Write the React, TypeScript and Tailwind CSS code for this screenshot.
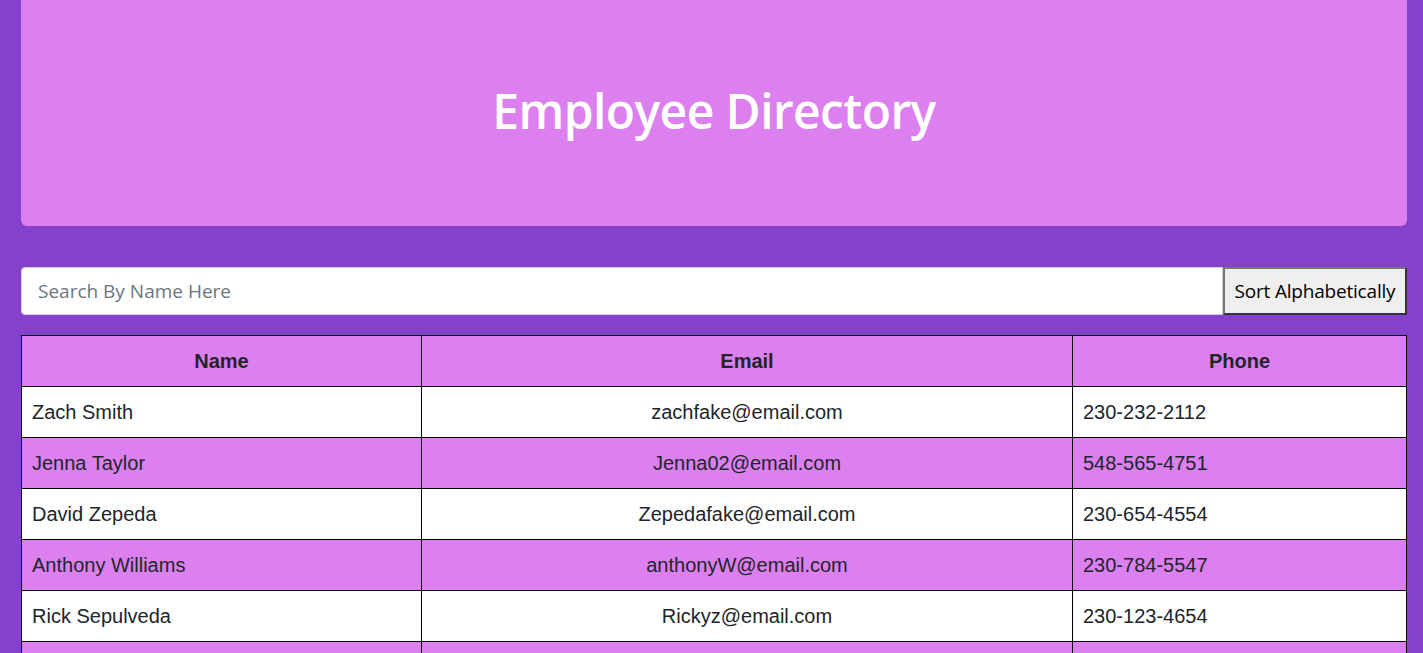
import React from "react";

const employees = [
  { name: "Zach Smith", email: "zachfake@email.com", phone: "230-232-2112" },
  { name: "Jenna Taylor", email: "Jenna02@email.com", phone: "548-565-4751" },
  { name: "David Zepeda", email: "Zepedafake@email.com", phone: "230-654-4554" },
  { name: "Anthony Williams", email: "anthonyW@email.com", phone: "230-784-5547" },
  { name: "Rick Sepulveda", email: "Rickyz@email.com", phone: "230-123-4654" },
  { name: "Maria Lopez", email: "marialopez@email.com", phone: "230-555-1234" },
];

export default function App() {
  return (
    <main className="min-h-screen bg-[#8540cc] pl-[21px] pr-[16px] pb-8">
      <div className="mb-[41px] flex h-[226px] items-center justify-center rounded-b-md bg-[#dc80f0]">
        <h1 className="mb-[4px] font-['Open_Sans',sans-serif] text-[48px] font-semibold tracking-[-0.6px] text-white">
          Employee Directory
        </h1>
      </div>

      <div className="mb-5 flex h-12">
        <input
          type="text"
          placeholder="Search By Name Here"
          className="h-12 flex-1 rounded-l-[4px] border border-[#ced4da] bg-white px-4 font-['Open_Sans',sans-serif] text-[19px] text-[#495057] placeholder:text-[#6c757d] focus:outline-none"
        />
        <button className="h-12 w-[184px] border-2 border-[#333] border-t-[#767676] border-l-[#767676] bg-[#efefef] font-['Open_Sans',sans-serif] text-[19px] tracking-[-0.2px] text-black">
          Sort Alphabetically
        </button>
      </div>

      <table className="w-full border-collapse border border-black font-['Liberation_Sans',Arial,sans-serif] text-[20px] text-[#212529]">
        <thead>
          <tr className="h-[51px] bg-[#dc80f0]">
            <th className="w-[400px] border border-black font-bold">Name</th>
            <th className="w-[651px] border border-black font-bold">Email</th>
            <th className="border border-black font-bold">Phone</th>
          </tr>
        </thead>
        <tbody>
          {employees.map((e, i) => (
            <tr key={e.email} className={i % 2 === 0 ? "h-[51px] bg-white" : "h-[51px] bg-[#dc80f0]"}>
              <td className="border border-black px-[10px] text-left">{e.name}</td>
              <td className="border border-black px-[10px] text-center">{e.email}</td>
              <td className="border border-black px-[10px] text-left">{e.phone}</td>
            </tr>
          ))}
        </tbody>
      </table>
    </main>
  );
}
